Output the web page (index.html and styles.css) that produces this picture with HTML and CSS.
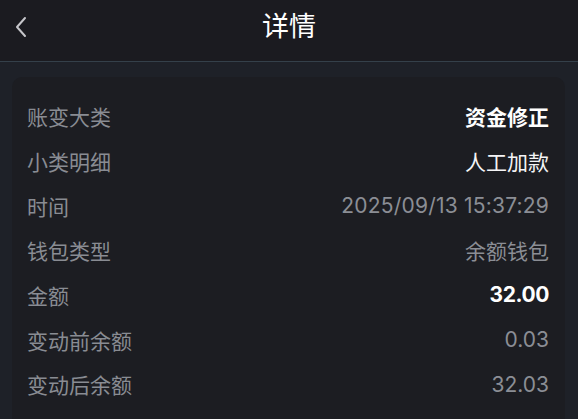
FILE: index.html
```html
<!DOCTYPE html>
<html lang="zh-CN">
<head>
<meta charset="utf-8">
<title>详情</title>
<link rel="stylesheet" href="styles.css">
</head>
<body>
<header class="nav">
  <button class="back" aria-label="返回">
    <svg width="14" height="22" viewBox="0 0 14 22"><path d="M11 2 L3 11 L11 20" fill="none" stroke="#c6c6ca" stroke-width="2" stroke-linecap="round" stroke-linejoin="round"/></svg>
  </button>
  <h1 class="title">详情</h1>
</header>
<main class="content">
  <section class="card">
    <div class="row"><span class="label">账变大类</span><span class="value strong">资金修正</span></div>
    <div class="row"><span class="label">小类明细</span><span class="value white">人工加款</span></div>
    <div class="row"><span class="label">时间</span><span class="value num">2025/09/13 15:37:29</span></div>
    <div class="row"><span class="label">钱包类型</span><span class="value">余额钱包</span></div>
    <div class="row"><span class="label">金额</span><span class="value strong num-bold">32.00</span></div>
    <div class="row"><span class="label">变动前余额</span><span class="value">0.03</span></div>
    <div class="row"><span class="label">变动后余额</span><span class="value">32.03</span></div>
  </section>
</main>
</body>
</html>
```

FILE: styles.css
```css
* { box-sizing: border-box; }
html, body {
  margin: 0;
  padding: 0;
  height: 100%;
}
body {
  background: #1e2128;
  font-family: Inter, "Noto Sans CJK SC", sans-serif;
  color: #8b8e95;
  overflow: hidden;
}
.nav {
  height: 62px;
  background: #1b1b20;
  border-bottom: 1px solid #34404a;
  display: flex;
  align-items: center;
  justify-content: center;
  position: relative;
}
.back {
  position: absolute;
  left: 11px;
  top: 15px;
  width: 20px;
  height: 24px;
  padding: 0;
  border: 0;
  background: none;
  display: flex;
  align-items: center;
  justify-content: center;
}
.title {
  margin: 0;
  font-size: 27px;
  font-weight: 400;
  color: #ffffff;
  line-height: 1;
  margin-top: -8px;
}
.content {
  padding: 15px 13px 0 12px;
}
.card {
  background: #1c1d22;
  border-radius: 10px;
  padding: 17px 16px 20px 15px;
}
.row {
  height: 44.67px;
  display: flex;
  align-items: center;
  justify-content: space-between;
  font-size: 21px;
}
.label {
  color: #898c93;
}
.value {
  color: #8b8e95;
}
.value.num {
  letter-spacing: 0.2px;
}
.value.white {
  color: #f4f4f6;
  font-weight: 400;
}
.value.strong {
  color: #ffffff;
  font-weight: 700;
}
.value.num-bold {
  font-weight: 650;
  letter-spacing: -0.4px;
}
```
